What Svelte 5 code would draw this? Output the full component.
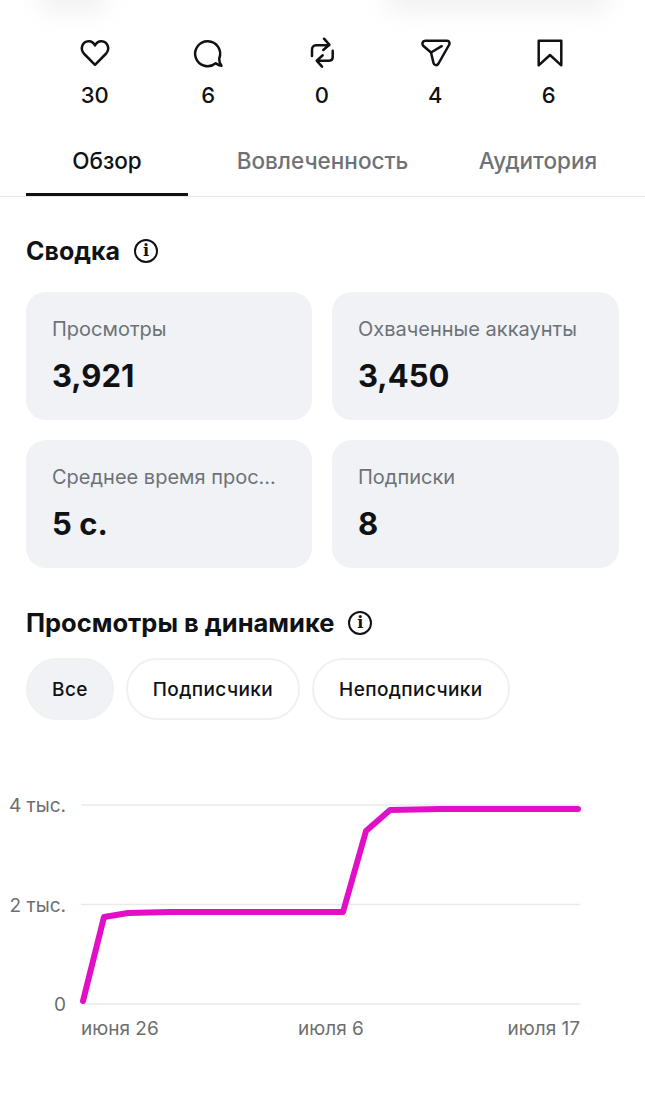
<script>
    const stats = [
        { icon: "heart", value: 30 },
        { icon: "comment", value: 6 },
        { icon: "repost", value: 0 },
        { icon: "send", value: 4 },
        { icon: "save", value: 6 }
    ];
    const tabs = ["Обзор", "Вовлеченность", "Аудитория"];
    const cards = [
        { label: "Просмотры", value: "3,921" },
        { label: "Охваченные аккаунты", value: "3,450" },
        { label: "Среднее время прос...", value: "5 с." },
        { label: "Подписки", value: "8" }
    ];
    const pills = ["Все", "Подписчики", "Неподписчики"];
    const grid = [
        { y: 20, label: "4 тыс." },
        { y: 119.5, label: "2 тыс." },
        { y: 219, label: "0" }
    ];
    const dates = [
        { x: 81, label: "июня 26", anchor: "start" },
        { x: 298, label: "июля 6", anchor: "start" },
        { x: 580, label: "июля 17", anchor: "end" }
    ];
    const line = "83,216 104,132 128,128 170,127 343,127 366,46 390,25 440,24 578,24";
</script>

<main>
    <div class="blobs">
        <span class="blob left"></span>
        <span class="blob right"></span>
    </div>

    <div class="stats">
        {#each stats as stat}
            <div class="stat">
                <svg class="stat-icon" viewBox="0 0 32 32">
                    {#if stat.icon === "heart"}
                        <path d="M16 27.8 L4.800 16.500 C1 12 3 4.500 9.500 4.200 C12.500 4 14.800 6 16 8.500 C17.200 6 19.500 4 22.500 4.200 C29 4.500 31 12 27.200 16.500 Z" />
                    {:else if stat.icon === "comment"}
                        <path d="M23.700 26.300 A12.500 12.500 0 1 1 27.200 21.500 Q27 25.500 29.500 28.700 Q26.500 28.500 23.700 26.300 Z" />
                    {:else if stat.icon === "repost"}
                        <path d="M6 19 V13 C6 10 7.500 8.300 10 8.300 H23.300 M18 1.700 L23.300 7.700 L17.300 13" />
                        <path d="M26.700 13.700 V20.300 C26.700 22.500 25.500 23.700 23.300 23.700 H11 M16.700 18.300 L10.700 23.700 L16 29.700" />
                    {:else if stat.icon === "send"}
                        <path d="M6.500 3.800 H28 C30.500 3.800 31 6 30 8 L19.500 26.500 C18 29 15 28.500 14.500 26 L12 15.500 L4.500 9 C2.500 7 3.500 3.800 6.500 3.800 Z" />
                        <path d="M12 15.500 L22.700 9.200" />
                    {:else}
                        <path d="M5.700 3.800 H28.300 V28.300 L17 18 L5.700 28.300 Z" />
                    {/if}
                </svg>
                <span class="stat-value">{stat.value}</span>
            </div>
        {/each}
    </div>

    <nav class="tabs">
        {#each tabs as tab, i}
            <div class="tab" class:active={i === 0}>{tab}</div>
        {/each}
    </nav>

    <section class="summary">
        <h2 class="small">
            Сводка
            <span class="info">i</span>
        </h2>
        <div class="cards">
            {#each cards as card}
                <div class="card">
                    <div class="card-label">{card.label}</div>
                    <div class="card-value">{card.value}</div>
                </div>
            {/each}
        </div>
    </section>

    <section class="dynamics">
        <h2>
            Просмотры в динамике
            <span class="info">i</span>
        </h2>
        <div class="pills">
            {#each pills as pill, i}
                <div class="pill" class:selected={i === 0}>{pill}</div>
            {/each}
        </div>
    </section>

    <svg class="chart" viewBox="0 0 645 270">
        {#each grid as g}
            <line x1="81" x2="580.5" y1={g.y} y2={g.y} class="grid-line" />
            <text x="66" y={g.y + 7} text-anchor="end" class="axis">{g.label}</text>
        {/each}
        {#each dates as d}
            <text x={d.x} y="250" text-anchor={d.anchor} class="axis">{d.label}</text>
        {/each}
        <polyline points={line} class="series" />
    </svg>
</main>

<style>
    :global(body) {
        background: #fff;
    }

    main {
        width: 645px;
        height: 1100px;
        overflow: hidden;
        position: relative;
        font-family: Inter, "Liberation Sans", sans-serif;
        color: #0f1114;
    }

    .blobs {
        position: absolute;
        top: 0;
        left: 0;
        right: 0;
    }

    .blob {
        position: absolute;
        top: -16px;
        height: 26px;
        background: #efefef;
        filter: blur(12px);
        border-radius: 14px;
    }

    .blob.left {
        left: 38px;
        width: 70px;
    }

    .blob.right {
        left: 385px;
        width: 225px;
    }

    .stats {
        display: grid;
        grid-template-columns: repeat(5, 113.5px);
        padding: 37px 0 0 38px;
        position: relative;
    }

    .stat {
        display: flex;
        flex-direction: column;
        align-items: center;
    }

    .stat-icon {
        width: 32px;
        height: 32px;
        fill: none;
        stroke: #0f1114;
        stroke-width: 2.5;
        stroke-linejoin: round;
        stroke-linecap: round;
    }

    .stat-value {
        font-size: 22px;
        font-weight: 500;
        line-height: 26px;
        margin-top: 13px;
    }

    .tabs {
        display: flex;
        justify-content: space-between;
        margin-top: 25px;
        padding: 0 26px;
        border-bottom: 1px solid #e6e7e9;
        height: 63px;
    }

    .tab {
        width: 162px;
        display: flex;
        justify-content: center;
        white-space: nowrap;
        font-size: 22.5px;
        font-weight: 500;
        line-height: 26px;
        padding-top: 15px;
        color: #6d7278;
        box-sizing: border-box;
    }

    .tab.active {
        color: #0f1114;
        border-bottom: 3px solid #0f1114;
    }

    h2 {
        display: flex;
        align-items: center;
        gap: 14px;
        margin: 0;
        font-size: 25.5px;
        font-weight: 700;
        line-height: 30px;
    }

    h2.small {
        font-size: 25px;
    }

    .info {
        width: 20px;
        height: 20px;
        border: 2.2px solid #0f1114;
        border-radius: 50%;
        display: flex;
        align-items: center;
        justify-content: center;
        font-family: "DejaVu Serif", serif;
        font-size: 16px;
        font-weight: 700;
    }

    .summary {
        padding: 39px 26px 0;
    }

    .cards {
        display: grid;
        grid-template-columns: 286px 287px;
        grid-auto-rows: 128px;
        gap: 20px;
        margin-top: 26px;
    }

    .card {
        background: #f0f2f5;
        border-radius: 20px;
        padding: 25px 26px;
    }

    .card-label {
        font-size: 20px;
        line-height: 24px;
        color: #6d7278;
        white-space: nowrap;
    }

    .card-value {
        font-size: 31px;
        font-weight: 700;
        line-height: 38px;
        margin-top: 16px;
    }

    .dynamics {
        padding: 40px 26px 0;
    }

    .pills {
        display: flex;
        gap: 12px;
        margin-top: 20px;
    }

    .pill {
        height: 62px;
        box-sizing: border-box;
        padding: 0 25px;
        border: 2px solid #f0f1f3;
        border-radius: 31px;
        display: flex;
        align-items: center;
        font-size: 19px;
        font-weight: 500;
        letter-spacing: 0.4px;
    }

    .pill.selected {
        background: #f0f2f5;
        padding: 0 24px;
    }

    .chart {
        display: block;
        margin-top: 65px;
        width: 645px;
        height: 270px;
    }

    .grid-line {
        stroke: #e9eaeb;
        stroke-width: 1.5;
    }

    .axis {
        font-family: Inter, "Liberation Sans", sans-serif;
        font-size: 19px;
        fill: #6e6e6e;
    }

    .series {
        fill: none;
        stroke: #e30fc6;
        stroke-width: 6;
        stroke-linejoin: round;
        stroke-linecap: round;
    }
</style>
